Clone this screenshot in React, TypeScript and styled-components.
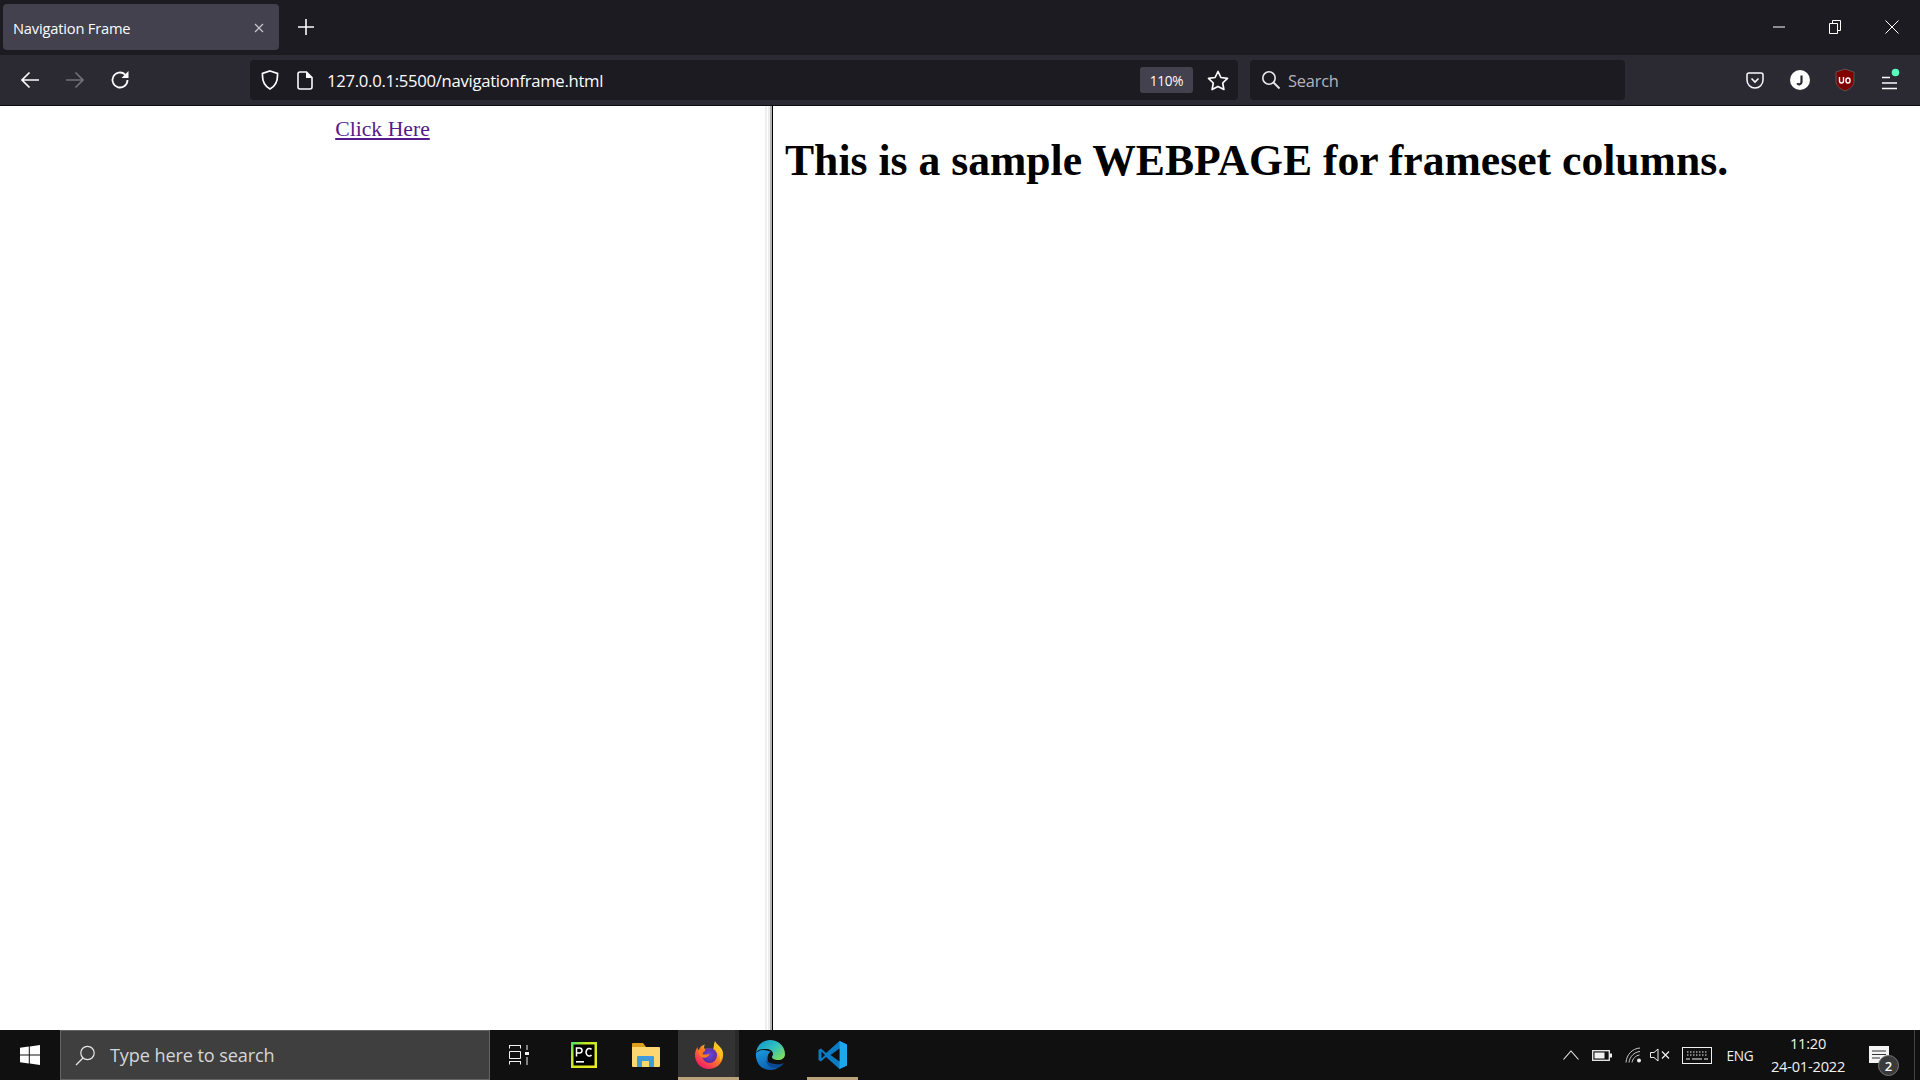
import React from "react";
import styled, { createGlobalStyle } from "styled-components";

const Global = createGlobalStyle`
  html, body { margin: 0; padding: 0; height: 100%; overflow: hidden; background: #fff; }
  #root { height: 100%; }
  * { box-sizing: border-box; }
`;

const uiFont = `"Open Sans", "Noto Sans", "Liberation Sans", sans-serif`;
const docFont = `"Liberation Serif", serif`;

const Page = styled.div`
  width: 1920px;
  height: 1080px;
  display: flex;
  flex-direction: column;
  font-family: ${uiFont};
`;

const TabStrip = styled.div`
  height: 55px;
  flex: none;
  background: #1c1b22;
  display: flex;
  align-items: flex-start;
  padding: 4px 0 0 3px;
`;

const Tab = styled.div`
  width: 276px;
  height: 46px;
  background: #42414d;
  border-radius: 4px;
  display: flex;
  align-items: center;
  justify-content: space-between;
  padding: 1px 14px 0 10px;
  color: #fbfbfe;
  font-size: 14.7px;
  letter-spacing: -0.2px;
`;

const NewTab = styled.div`
  width: 52px;
  height: 46px;
  padding-left: 2px;
  display: flex;
  align-items: center;
  justify-content: center;
`;

const WindowControls = styled.div`
  margin-left: auto;
  margin-top: -4px;
  height: 55px;
  display: flex;
  align-items: center;
`;

const WindowButton = styled.div`
  width: 56.5px;
  height: 55px;
  display: flex;
  align-items: center;
  justify-content: center;
  padding-bottom: 1px;
`;

const Toolbar = styled.div`
  height: 51px;
  flex: none;
  background: #2b2a33;
  border-bottom: 1px solid #0c0c0d;
  display: flex;
  align-items: center;
  padding: 0 8px 0 7px;
`;

const NavButton = styled.div`
  width: 45px;
  height: 40px;
  flex: none;
  display: flex;
  align-items: center;
  justify-content: center;
`;

const Field = styled.div<{ $w: number; $ml: number }>`
  width: ${(p) => p.$w}px;
  margin-left: ${(p) => p.$ml}px;
  height: 40px;
  flex: none;
  background: #1c1b22;
  border-radius: 4px;
  display: flex;
  align-items: center;
`;

const SlotIcon = styled.div<{ $w: number; $shift?: number }>`
  width: ${(p) => p.$w}px;
  flex: none;
  display: flex;
  align-items: center;
  justify-content: center;
  padding-left: ${(p) => p.$shift ?? 0}px;
`;

const UrlText = styled.span`
  color: #fbfbfe;
  font-size: 16.7px;
  letter-spacing: -0.3px;
  margin-left: 5px;
  padding-top: 1px;
  flex: 1;
  white-space: nowrap;
`;

const ZoomBadge = styled.span`
  width: 53px;
  height: 26px;
  background: #42414d;
  border-radius: 3px;
  color: #fbfbfe;
  font-size: 13.6px;
  letter-spacing: -0.3px;
  display: flex;
  align-items: center;
  justify-content: center;
`;

const SearchText = styled.span`
  color: #b4b4ba;
  font-size: 16.4px;
  letter-spacing: -0.2px;
  padding-top: 1px;
`;

const ActionGroup = styled.div`
  margin-left: 107px;
  display: flex;
`;

const Frames = styled.div`
  flex: 1;
  min-height: 0;
  display: flex;
  background: #fff;
  font-family: ${docFont};
`;

const LeftFrame = styled.div`
  width: 765px;
  flex: none;
  text-align: center;
  padding-top: 10px;
  font-size: 21.7px;
  line-height: 27px;
`;

const VisitedLink = styled.a`
  color: #551a8b;
  text-decoration: underline;
`;

const Splitter = styled.div`
  width: 8px;
  flex: none;
  background: linear-gradient(
    to right,
    #eeeeee 0 2px,
    #ffffff 2px 3px,
    #eeeeee 3px 5px,
    #b4b4b4 5px 7px,
    #000000 7px 8px
  );
`;

const RightFrame = styled.div`
  flex: 1;
  padding: 29px 0 0 12px;
`;

const Heading = styled.h1`
  margin: 0;
  font-size: 43.65px;
  line-height: 50px;
  font-weight: 700;
  color: #000;
  white-space: nowrap;
`;

const Taskbar = styled.div`
  height: 50px;
  flex: none;
  background: #101010;
  display: flex;
  align-items: stretch;
`;

const StartButton = styled.div`
  width: 60px;
  display: flex;
  align-items: center;
  justify-content: center;
`;

const TaskSearch = styled.div`
  width: 430px;
  background: #3f3f3f;
  border: 1px solid #646464;
  display: flex;
  align-items: center;
  padding-left: 14px;
  gap: 14px;
  color: #d6d6d6;
  font-size: 18.1px;
  letter-spacing: -0.1px;
`;

const TaskApp = styled.div<{ $w: number; $mr?: number; $active?: boolean; $running?: boolean }>`
  width: ${(p) => p.$w}px;
  margin-right: ${(p) => p.$mr ?? 0}px;
  flex: none;
  display: flex;
  align-items: center;
  justify-content: center;
  background: ${(p) => (p.$active ? "#333333" : "transparent")};
  box-shadow: ${(p) => (p.$active ? "inset -4px 0 0 #2a2a2a" : "none")};
  border-bottom: ${(p) => (p.$active || p.$running ? "3px solid #b9a27c" : "3px solid transparent")};
  padding-top: 3px;
`;

const Tray = styled.div`
  margin-left: auto;
  display: flex;
  align-items: center;
  color: #f0f0f0;
`;

const TrayIcon = styled.div<{ $w: number }>`
  width: ${(p) => p.$w}px;
  flex: none;
  display: flex;
  align-items: center;
  justify-content: center;
`;

const Lang = styled.div`
  width: 36px;
  text-align: center;
  font-size: 13.6px;
  letter-spacing: -0.2px;
`;

const Clock = styled.div`
  width: 100px;
  display: flex;
  flex-direction: column;
  align-items: center;
  font-size: 14.6px;
  letter-spacing: -0.2px;
  line-height: 23px;
`;

const Notify = styled.div`
  width: 47px;
  height: 50px;
  position: relative;
  display: flex;
  align-items: center;
  padding-left: 1px;
  margin-left: 10px;
  margin-right: 5px;
  border-right: 1px solid #444;
`;

const NotifyBadge = styled.span`
  position: absolute;
  left: 10px;
  top: 25px;
  width: 21px;
  height: 21px;
  border-radius: 50%;
  background: #3a3a3a;
  border: 1px solid #777;
  color: #fff;
  font-size: 13px;
  font-weight: 600;
  display: flex;
  align-items: center;
  justify-content: center;
`;

const Firefox = () => (
  <svg width="30" height="30" viewBox="0 0 30 30">
    <defs>
      <linearGradient id="ffa" x1="0.8" y1="0.1" x2="0.2" y2="0.95">
        <stop offset="0" stopColor="#ffe226" />
        <stop offset="0.4" stopColor="#ff8a1f" />
        <stop offset="1" stopColor="#f5156c" />
      </linearGradient>
      <radialGradient id="ffb" cx="0.5" cy="0.45" r="0.55">
        <stop offset="0" stopColor="#6b49d8" />
        <stop offset="1" stopColor="#5b2aa0" />
      </radialGradient>
    </defs>
    <path d="M21 1c1 3 3 4 5 6 3 3 3.500 6 3 10-1 7-7 12-14 12C7 29 1 23 1 15c0-3 1-6 2.500-8 0 1.500.5 2.500 1.200 3.200C6 7 8 5 11 4.500 9.500 6.500 10 8 11 9c3-1 6-1 8 .5 1-3 1-6 2-8.500z" fill="url(#ffa)" />
    <circle cx="15.500" cy="15.500" r="7.500" fill="url(#ffb)" />
    <path d="M4.500 10c2 -1 5 -1 7 .5-1 1-3 2-3.200 3.500 2.500 1 5.500.5 7.500-.5-1 3-4 5-7 4-3-1-5-4-4.300-7.500z" fill="#ff7a1e" />
    <path d="M21 2c3 3 7 6 7 12 0 3-1 5-2 7 0-5-1-9-5-12-.5-2-.5-5 0-7z" fill="#ffc21f" />
  </svg>
);

const Edge = () => (
  <svg width="30" height="30" viewBox="0 0 30 30">
    <defs>
      <linearGradient id="eda" x1="0" y1="0" x2="1" y2="0.8">
        <stop offset="0" stopColor="#0c8fd0" />
        <stop offset="0.55" stopColor="#32bfc0" />
        <stop offset="1" stopColor="#7ee05a" />
      </linearGradient>
      <linearGradient id="edb" x1="0" y1="0" x2="0.6" y2="1">
        <stop offset="0" stopColor="#1b9de2" />
        <stop offset="1" stopColor="#0d5cab" />
      </linearGradient>
    </defs>
    <path d="M1 13C2 5 8 0 15 0c8 0 15 6 15 14 0 4-3 6-7 6-3 0-6-1-6-3 0-1 1-1.500 1-3 0-3-3-5-7-5-5 0-9 1-10 4z" fill="url(#eda)" />
    <path d="M1 13C0 22 6 30 15 30c4 0 7-1 9-3-5 1-9-1-10.500-4-2-4-1-9 2-11.500C12 10 7 9 4 11c-1 .5-2 1-3 2z" fill="url(#edb)" />
    <path d="M11 19c0 5 4 9 9 9 4 0 7-2 9-5-3 1.500-6 1.500-9 1-4-.5-8-2-9-5z" fill="#0a4a94" />
  </svg>
);

const VsCode = () => (
  <svg width="30" height="30" viewBox="0 0 30 30">
    <path d="M21.500 1 29 4.500v21L21.500 29 8 17l-5 4.500-2.500-1.500v-10L3 8.500l5 4.500L21.500 1z" fill="#0b7cc4" />
    <path d="M21.500 1 29 4.500v21L21.500 29V1z" fill="#1ea7ee" />
    <path d="M21.500 8.500 12.500 15l9 6.500v-13zM3.500 11.500v7l3.500-3.500-3.500-3.500z" fill="#101010" />
  </svg>
);

const Folder = () => (
  <svg width="28" height="26" viewBox="0 0 28 26">
    <path d="M0 2a1 1 0 0 1 1-1h10l3 4H0z" fill="#dca01c" />
    <path d="M0 5h27a1 1 0 0 1 1 1v18a1 1 0 0 1-1 1H1a1 1 0 0 1-1-1z" fill="#fcd671" />
    <path d="M5 25V15a1 1 0 0 1 1-1h15a1 1 0 0 1 1 1v10h-5v-6h-7v6z" fill="#3f9bdc" />
    <rect x="10" y="19" width="7" height="4" fill="#fcd671" />
  </svg>
);

const PyCharm = () => (
  <svg width="26" height="26" viewBox="0 0 26 26">
    <defs>
      <linearGradient id="pc" x1="0" y1="0" x2="1" y2="1">
        <stop offset="0" stopColor="#3de36a" />
        <stop offset="0.3" stopColor="#c6e820" />
        <stop offset="1" stopColor="#f0ec20" />
      </linearGradient>
    </defs>
    <rect width="26" height="26" fill="url(#pc)" />
    <rect x="2.500" y="2.500" width="21" height="21" fill="#000" />
    <rect x="5" y="19" width="8" height="1.600" fill="#fff" />
    <path d="M5.500 14.500V6h3a2.500 2.500 0 0 1 0 5h-3M20.500 7.500c-1-1.500-5-2-5.500 2.800.3 4.500 4.500 4.200 5.500 2.700" fill="none" stroke="#fff" strokeWidth="1.500" />
  </svg>
);

const UBlock = () => (
  <svg width="20" height="24" viewBox="0 0 20 24">
    <path d="M10 1 19 4v9c0 5-4 8-9 10-5-2-9-5-9-10V4z" fill="#800000" stroke="#5f5f5f" strokeWidth="0.800" />
    <path d="M4.500 9v4a2 2 0 0 0 4 0V9M11 13a2 2 0 1 0 4 0v-1a2 2 0 1 0-4 0z" fill="none" stroke="#fff" strokeWidth="1.400" />
  </svg>
);

export default function App() {
  return (
    <Page>
      <Global />
      <TabStrip>
        <Tab>
          <span>Navigation Frame</span>
          <svg width="12" height="12" viewBox="0 0 12 12">
            <path d="M2 2l8 8M10 2l-8 8" stroke="#c8c8cc" strokeWidth="1.200" />
          </svg>
        </Tab>
        <NewTab>
          <svg width="16" height="16" viewBox="0 0 16 16">
            <path d="M8 0v16M0 8h16" stroke="#fbfbfe" strokeWidth="1.600" />
          </svg>
        </NewTab>
        <WindowControls>
          <WindowButton>
            <svg width="12" height="2" viewBox="0 0 12 2"><path d="M0 1h12" stroke="#fff" /></svg>
          </WindowButton>
          <WindowButton>
            <svg width="12" height="14" viewBox="0 0 12 14">
              <path d="M3.500 3V.5h8v10H9M.5 3.500h8v10h-8z" fill="none" stroke="#fff" />
            </svg>
          </WindowButton>
          <WindowButton>
            <svg width="14" height="14" viewBox="0 0 14 14"><path d="M.5.500l13 13M13.500.500l-13 13" stroke="#fff" /></svg>
          </WindowButton>
        </WindowControls>
      </TabStrip>
      <Toolbar>
        <NavButton>
          <svg width="20" height="18" viewBox="0 0 20 18">
            <path d="M19 9H2M9.500 1.500 2 9l7.500 7.500" fill="none" stroke="#fbfbfe" strokeWidth="1.700" />
          </svg>
        </NavButton>
        <NavButton>
          <svg width="20" height="18" viewBox="0 0 20 18">
            <path d="M1 9h17M10.500 1.500 18 9l-7.500 7.500" fill="none" stroke="#72717a" strokeWidth="1.700" />
          </svg>
        </NavButton>
        <NavButton>
          <svg width="20" height="20" viewBox="0 0 20 20">
            <path d="M17.500 10a7.500 7.500 0 1 1-2.400-5.500" fill="none" stroke="#fbfbfe" strokeWidth="1.800" />
            <path d="M18.500 1v7h-7z" fill="#fbfbfe" />
          </svg>
        </NavButton>
        <Field $w={988} $ml={108}>
          <SlotIcon $w={38} $shift={2}>
            <svg width="18" height="20" viewBox="0 0 18 20">
              <path d="M9 1 16.500 3.500c.5 8-2 12.500-7.500 15.500C3.500 16 1 11.500 1.500 3.500z" fill="none" stroke="#fbfbfe" strokeWidth="1.700" />
            </svg>
          </SlotIcon>
          <SlotIcon $w={34}>
            <svg width="16" height="19" viewBox="0 0 16 19">
              <path d="M1 3a2 2 0 0 1 2-2h6.500L15 6.500V16a2 2 0 0 1-2 2H3a2 2 0 0 1-2-2z" fill="none" stroke="#fbfbfe" strokeWidth="1.600" />
              <path d="M9 1v6h6z" fill="#fbfbfe" />
            </svg>
          </SlotIcon>
          <UrlText>127.0.0.1:5500/navigationframe.html</UrlText>
          <ZoomBadge>110%</ZoomBadge>
          <SlotIcon $w={45} $shift={4}>
            <svg width="22" height="21" viewBox="0 0 22 21">
              <path d="M11 1.500l2.900 6 6.600.9-4.800 4.600 1.200 6.500L11 16.400l-5.900 3.100 1.200-6.500L1.500 8.400l6.600-.9z" fill="none" stroke="#fbfbfe" strokeWidth="1.700" strokeLinejoin="round" />
            </svg>
          </SlotIcon>
        </Field>
        <Field $w={375} $ml={12}>
          <SlotIcon $w={38} $shift={4}>
            <svg width="20" height="20" viewBox="0 0 20 20">
              <circle cx="8" cy="8" r="6.200" fill="none" stroke="#e8e8ec" strokeWidth="1.600" />
              <path d="M12.500 12.500 18.500 18.500" stroke="#e8e8ec" strokeWidth="1.800" />
            </svg>
          </SlotIcon>
          <SearchText>Search</SearchText>
        </Field>
        <ActionGroup>
          <NavButton>
            <svg width="18" height="17" viewBox="0 0 18 17">
              <path d="M1 3a2 2 0 0 1 2-2h12a2 2 0 0 1 2 2v5a8 8 0 0 1-16 0z" fill="none" stroke="#fbfbfe" strokeWidth="1.500" />
              <path d="M5.500 6.500 9 10l3.500-3.500" fill="none" stroke="#fbfbfe" strokeWidth="1.600" />
            </svg>
          </NavButton>
          <NavButton>
            <svg width="20" height="20" viewBox="0 0 20 20">
              <circle cx="10" cy="10" r="10" fill="#fff" />
              <path d="M11.500 5.500v6.500a2.300 2.300 0 0 1-4.300 1.200" fill="none" stroke="#2b2a33" strokeWidth="2.200" />
            </svg>
          </NavButton>
          <NavButton>
            <UBlock />
          </NavButton>
          <NavButton>
            <svg width="22" height="24" viewBox="0 0 22 24">
              <path d="M3 9.500h8M3 15h15M3 20.500h15" stroke="#fbfbfe" strokeWidth="1.600" />
              <circle cx="16.500" cy="4.500" r="3.800" fill="#54ffbd" />
            </svg>
          </NavButton>
        </ActionGroup>
      </Toolbar>
      <Frames>
        <LeftFrame>
          <VisitedLink href="#">Click Here</VisitedLink>
        </LeftFrame>
        <Splitter />
        <RightFrame>
          <Heading>This is a sample WEBPAGE for frameset columns.</Heading>
        </RightFrame>
      </Frames>
      <Taskbar>
        <StartButton>
          <svg width="20" height="20" viewBox="0 0 20 20">
            <path d="M0 2.800 8.800 1.600v7.900H0zM9.800 1.400 20 0v9.500H9.800zM0 10.500h8.800v7.900L0 17.200zM9.800 10.500H20V20L9.800 18.600z" fill="#fff" />
          </svg>
        </StartButton>
        <TaskSearch>
          <svg width="21" height="21" viewBox="0 0 21 21">
            <circle cx="12.500" cy="8" r="6.700" fill="none" stroke="#e8e8e8" strokeWidth="1.200" />
            <path d="M8 13 1 20" stroke="#e8e8e8" strokeWidth="1.300" />
          </svg>
          <span>Type here to search</span>
        </TaskSearch>
        <TaskApp $w={58}>
          <svg width="20" height="20" viewBox="0 0 20 20">
            <path d="M0 .5h12M.5.500v3M11.500.500v3M.5 6.500h11v7H.5zM0 16.500h12M.5 16.500v3M11.500 16.500v3" fill="none" stroke="#f2f2f2" />
            <path d="M18 0v5M18 12v8" stroke="#f2f2f2" />
            <rect x="16" y="7" width="4" height="3" fill="#f2f2f2" />
          </svg>
        </TaskApp>
        <TaskApp $w={72}><PyCharm /></TaskApp>
        <TaskApp $w={52} $mr={6}><Folder /></TaskApp>
        <TaskApp $w={61} $active><Firefox /></TaskApp>
        <TaskApp $w={62} $mr={6}><Edge /></TaskApp>
        <TaskApp $w={51} $running><VsCode /></TaskApp>
        <Tray>
          <TrayIcon $w={30}>
            <svg width="16" height="10" viewBox="0 0 16 10"><path d="M.5 9.500 8 1l7.500 8.500" fill="none" stroke="#f0f0f0" strokeWidth="1.100" /></svg>
          </TrayIcon>
          <TrayIcon $w={32}>
            <svg width="20" height="11" viewBox="0 0 20 11">
              <rect x=".7" y=".7" width="16.600" height="9.600" fill="none" stroke="#f0f0f0" strokeWidth="1.300" />
              <rect x="2.500" y="2.500" width="10" height="6" fill="#f0f0f0" />
              <rect x="18" y="3.500" width="2" height="4" fill="#f0f0f0" />
            </svg>
          </TrayIcon>
          <TrayIcon $w={30}>
            <svg width="17" height="16" viewBox="0 0 17 16">
              <path d="M1 15.500C1.500 8 7 1.500 15 1M4 15.500C4.500 10 9 5 15 4.500M7 15.500C7.500 12 10.500 8.500 14.500 8" fill="none" stroke="#c8c8c8" />
              <circle cx="14" cy="13.500" r="2" fill="#f0f0f0" />
            </svg>
          </TrayIcon>
          <TrayIcon $w={24}>
            <svg width="20" height="14" viewBox="0 0 20 14">
              <path d="M.5 4.500h3.500L8 1v12L4 9.500H.5z" fill="none" stroke="#f0f0f0" />
              <path d="M12 3.500l7 7M19 3.500l-7 7" stroke="#f0f0f0" strokeWidth="1.200" />
            </svg>
          </TrayIcon>
          <TrayIcon $w={50}>
            <svg width="30" height="17" viewBox="0 0 30 17">
              <rect x=".5" y=".5" width="29" height="16" fill="none" stroke="#f0f0f0" />
              <path d="M5 5h20M5 8h20" stroke="#f0f0f0" strokeDasharray="1.500 1.500" />
              <path d="M4 12h4M10 12h10M22 12h4" stroke="#f0f0f0" />
            </svg>
          </TrayIcon>
          <Lang>ENG</Lang>
          <Clock>
            <span>11:20</span>
            <span>24-01-2022</span>
          </Clock>
          <Notify>
            <svg width="21" height="19" viewBox="0 0 21 19">
              <path d="M0 0h20v17H0z" fill="#f4f4f4" />
              <path d="M3 5h14M3 8.500h14M3 12h8" stroke="#333" strokeWidth="1.100" />
            </svg>
            <NotifyBadge>2</NotifyBadge>
          </Notify>
        </Tray>
      </Taskbar>
    </Page>
  );
}
